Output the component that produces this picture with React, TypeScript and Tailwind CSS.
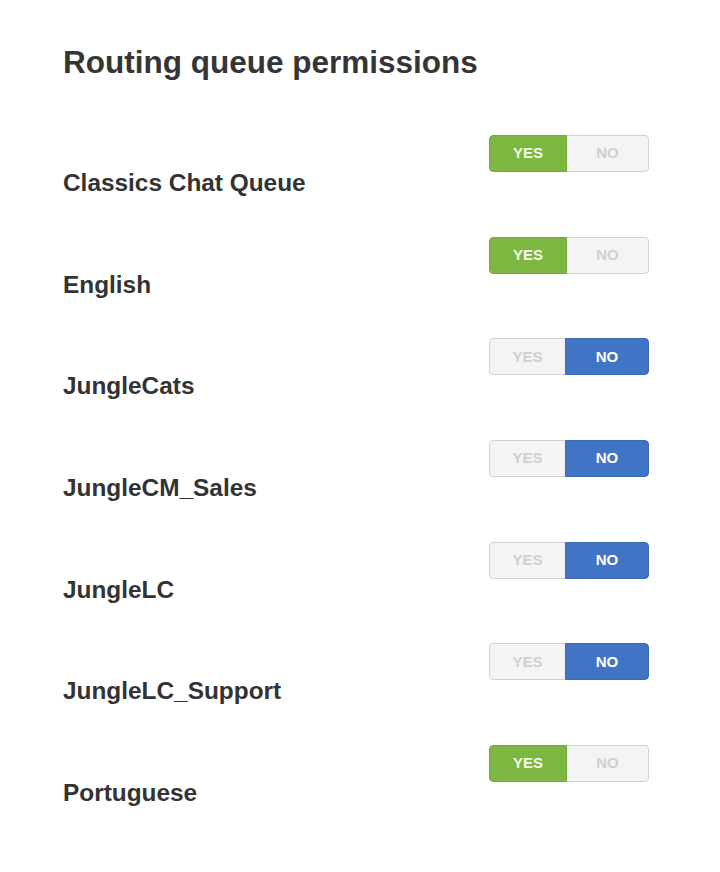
import React, { useState } from "react";

interface Queue {
  name: string;
  allowed: boolean;
}

const initialQueues: Queue[] = [
  { name: "Classics Chat Queue", allowed: true },
  { name: "English", allowed: true },
  { name: "JungleCats", allowed: false },
  { name: "JungleCM_Sales", allowed: false },
  { name: "JungleLC", allowed: false },
  { name: "JungleLC_Support", allowed: false },
  { name: "Portuguese", allowed: true },
];

const YesNoSwitch: React.FC<{ value: boolean; onChange: (v: boolean) => void }> = ({
  value,
  onChange,
}) => {
  return (
    <div className="flex h-[37px] w-[160px] shrink-0 overflow-hidden rounded-[4px] text-[15px] font-bold">
      <button
        onClick={() => onChange(true)}
        className={
          value
            ? "w-[78px] bg-[#7cb73f] text-[#f4faec] border border-[#72ab37] rounded-l-[4px]"
            : "w-[76px] bg-[#f4f4f4] text-[#d0d0d0] border border-r-0 border-[#d2d2d2] rounded-l-[4px]"
        }
      >
        YES
      </button>
      <button
        onClick={() => onChange(false)}
        className={
          value
            ? "flex-1 bg-[#f4f4f4] text-[#d0d0d0] border border-l-0 border-[#d2d2d2] rounded-r-[4px]"
            : "flex-1 bg-[#4274c6] text-white border border-[#3a6ab8] rounded-r-[4px]"
        }
      >
        NO
      </button>
    </div>
  );
};

export default function App() {
  const [queues, setQueues] = useState(initialQueues);

  const setAllowed = (idx: number, allowed: boolean) =>
    setQueues((q) => q.map((item, i) => (i === idx ? { ...item, allowed } : item)));

  return (
    <div className="min-h-[872px] w-[720px] bg-white pl-[63px] pr-[71px] pt-[44px] font-['Liberation_Sans',Arial,sans-serif] text-[#333333]">
      <h1 className="text-[31.5px] font-bold leading-[36px] text-[#353535]">Routing queue permissions</h1>

      <div className="mt-[55px] flex flex-col">
        {queues.map((q, i) => (
          <div key={q.name} className="flex h-[101.67px] items-start justify-between">
            <span className="pt-[34px] text-[24.4px] font-bold leading-[28px] text-[#333333]">{q.name}</span>
            <YesNoSwitch value={q.allowed} onChange={(v) => setAllowed(i, v)} />
          </div>
        ))}
      </div>
    </div>
  );
}
